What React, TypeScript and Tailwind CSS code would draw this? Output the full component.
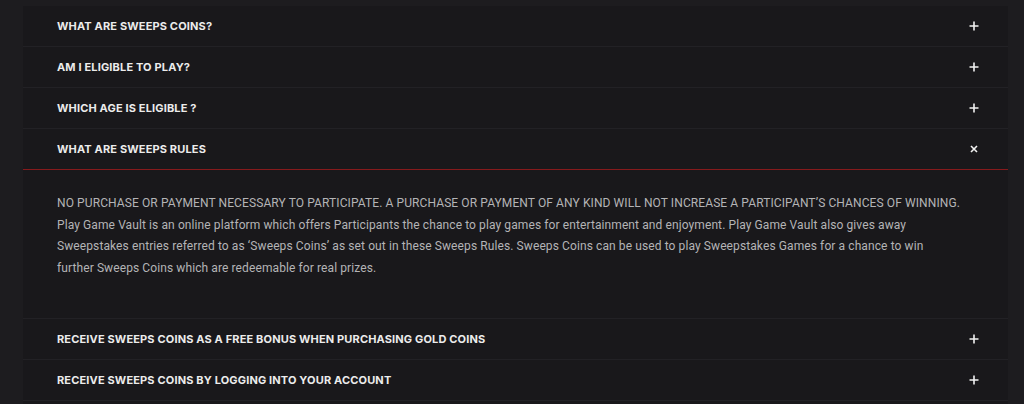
import React from "react";

const Plus = () => (
  <svg width="10" height="10" viewBox="0 0 10 10" className="shrink-0">
    <path d="M5 0.5V9.5M0.5 5H9.5" stroke="#f2f2f2" strokeWidth="1.6" />
  </svg>
);

const Cross = () => (
  <svg width="8" height="8" viewBox="0 0 8 8" className="shrink-0">
    <path d="M1 1L7 7M7 1L1 7" stroke="#f2f2f2" strokeWidth="1.6" />
  </svg>
);

const Row = ({ title, open = false }: { title: string; open?: boolean }) => (
  <div
    className={`flex h-[41px] items-center justify-between pl-[34px] pr-[29px] ${
      open ? "border-b border-[#861a1c]" : "border-b border-[#222125]"
    }`}
  >
    <span className="text-[11px] font-bold uppercase tracking-[0.15px] text-[#ececec]">{title}</span>
    <span className="flex w-[10px] justify-center">{open ? <Cross /> : <Plus />}</span>
  </div>
);

export default function App() {
  return (
    <div
      className="h-[404px] w-[1024px] overflow-hidden bg-[#1d1c1f] pt-[6px]"
      style={{ fontFamily: "Inter, 'Noto Sans', sans-serif" }}
    >
      <div className="ml-[23px] mr-[16px] h-full bg-[#19181b]">
        <Row title="What are Sweeps Coins?" />
        <Row title="Am I eligible to play?" />
        <Row title="Which age is eligible ?" />
        <Row title="What are Sweeps Rules" open />
        <div
          className="whitespace-nowrap border-b border-[#222125] pb-[39px] pl-[34px] pr-[20px] pt-[23px] text-[12px] leading-[21.6px] tracking-[0.1px] text-[#b4b4b6]"
          style={{ fontFamily: "Roboto, 'Noto Sans', sans-serif" }}
        >
          NO PURCHASE OR PAYMENT NECESSARY TO PARTICIPATE. A PURCHASE OR PAYMENT OF ANY KIND WILL NOT INCREASE A
          PARTICIPANT’S CHANCES OF WINNING.
          <br />
          Play Game Vault is an online platform which offers Participants the chance to play games for entertainment and
          enjoyment. Play Game Vault also gives away
          <br />
          Sweepstakes entries referred to as ‘Sweeps Coins’ as set out in these Sweeps Rules. Sweeps Coins can be used to
          play Sweepstakes Games for a chance to win
          <br />
          further Sweeps Coins which are redeemable for real prizes.
        </div>
        <Row title="Receive Sweeps Coins as a free bonus when purchasing Gold Coins" />
        <Row title="Receive Sweeps Coins by logging into your account" />
      </div>
    </div>
  );
}
